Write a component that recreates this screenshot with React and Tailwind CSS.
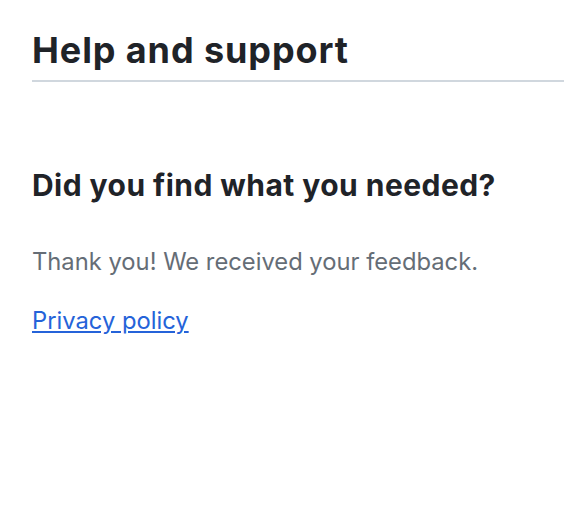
export default function App() {
  return (
    <div className="min-h-screen bg-white pl-8 pt-7" style={{ fontFamily: "Inter, 'Noto Sans', sans-serif" }}>
      <h1 className="border-b-2 border-[#d0d7de] pb-2 text-[36px] font-bold leading-[44px] tracking-[0.025em] text-[#1f2328]">
        Help and support
      </h1>

      <div className="mt-[85px]">
        <h2 className="text-[30px] font-bold leading-9 tracking-[0.015em] text-[#1f2328]">
          Did you find what you needed?
        </h2>
        <p className="mt-[43px] text-[23.75px] leading-8 text-[#656d76]">
          Thank you! We received your feedback.
        </p>
        <a href="#" className="mt-[27px] inline-block text-[23.75px] leading-8 text-[#2563d9] underline">
          Privacy policy
        </a>
      </div>
    </div>
  );
}
